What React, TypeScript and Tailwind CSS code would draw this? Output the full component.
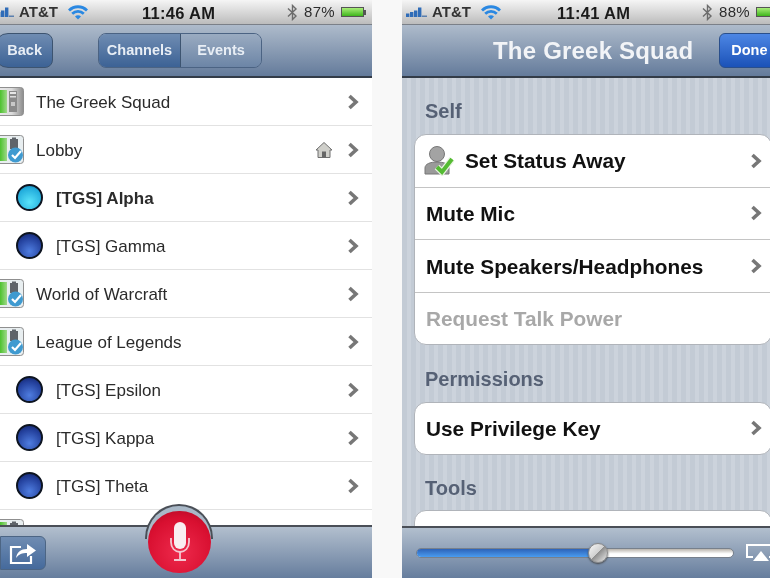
const rows = [
  { name: "The Greek Squad", icon: "server" },
  { name: "Lobby", icon: "channel", home: true },
  { name: "[TGS] Alpha", icon: "cyan", bold: true },
  { name: "[TGS] Gamma", icon: "blue" },
  { name: "World of Warcraft", icon: "channel" },
  { name: "League of Legends", icon: "channel" },
  { name: "[TGS] Epsilon", icon: "blue" },
  { name: "[TGS] Kappa", icon: "blue" },
  { name: "[TGS] Theta", icon: "blue" },
  { name: "", icon: "channel" },
];

function Chevron() {
  return (
    <svg width="12" height="16" viewBox="0 0 12 16" className="shrink-0">
      <path d="M2.5 2 L9 8 L2.5 14" fill="none" stroke="#777" strokeWidth="3.6" />
    </svg>
  );
}

function Signal() {
  return (
    <svg width="22" height="12" viewBox="0 0 22 12" className="shrink-0">
      <rect x="0" y="7.5" width="3.4" height="3.5" fill="#2f6cb8" />
      <rect x="4" y="6" width="3.4" height="5" fill="#2f6cb8" />
      <rect x="8" y="4.5" width="3.4" height="6.5" fill="#2f6cb8" />
      <rect x="12" y="1.5" width="3.4" height="9.5" fill="#2f6cb8" />
      <rect x="16" y="9.5" width="5" height="1.5" fill="#5a7fae" />
    </svg>
  );
}

function Wifi() {
  return (
    <svg width="20" height="15" viewBox="0 0 20 15" className="shrink-0">
      <path d="M1 5.5 C6 0.5 14 0.5 19 5.5" fill="none" stroke="#2a88e2" strokeWidth="2.8" />
      <path d="M4.2 8.7 C7.5 5.7 12.5 5.7 15.8 8.7" fill="none" stroke="#2a88e2" strokeWidth="2.8" />
      <path d="M7 11.4 C8.8 10 11.2 10 13 11.4 L10 14.5 Z" fill="#2a88e2" />
    </svg>
  );
}

function Bluetooth() {
  return (
    <svg width="11" height="17" viewBox="0 0 11 17" className="shrink-0">
      <path d="M1 4.5 L9 12 L5.5 15.5 L5.5 1.5 L9 5 L1 12.5" fill="none" stroke="#6b6b6b" strokeWidth="1.4" />
    </svg>
  );
}

function Battery() {
  return (
    <div className="flex shrink-0 items-center">
      <div className="h-[10px] w-[23px] border border-[#555] bg-[linear-gradient(#a8ee78,#3fb51d)]" />
      <div className="h-[5px] w-[2px] bg-[#555]" />
    </div>
  );
}

function StatusBar({ time, pct, pad, timeX, rightX }: { time: string; pct: string; pad: string; timeX: string; rightX: string }) {
  return (
    <div className="relative flex h-[25px] shrink-0 items-center border-b border-[#7b8088] bg-[linear-gradient(#f5f5f5,#bcbcbc)] text-[15px] text-[#2c2c2c]">
      <div className={`flex items-center ${pad}`}>
        <Signal />
        <span className="mr-[10px] ml-[4px] font-bold text-[#333]">AT&amp;T</span>
        <Wifi />
      </div>
      <span className={`absolute top-[1px] text-[16.5px] font-bold tracking-[0.3px] text-[#1a1a1a] ${timeX}`}>{time}</span>
      <div className={`absolute top-0 flex h-full items-center gap-[6px] whitespace-nowrap ${rightX}`}>
        <Bluetooth />
        <span className="text-[15px] font-medium tracking-[0.3px]">{pct}</span>
        <Battery />
      </div>
    </div>
  );
}

function Server() {
  return (
    <svg width="24" height="29" viewBox="0 0 24 29" className="mr-[12px] shrink-0">
      <defs>
        <linearGradient id="srvBody" x1="0" x2="1" y1="0" y2="0">
          <stop offset="0" stopColor="#ececec" />
          <stop offset="0.6" stopColor="#dcdcdc" />
          <stop offset="1" stopColor="#8c8c8c" />
        </linearGradient>
        <linearGradient id="srvGreen" x1="0" x2="1" y1="0" y2="0">
          <stop offset="0" stopColor="#4cc22e" />
          <stop offset="1" stopColor="#9fd889" />
        </linearGradient>
      </defs>
      <rect x="-6" y="0.5" width="29.5" height="28" rx="3" fill="url(#srvBody)" stroke="#8f8f8f" />
      <rect x="0" y="3" width="7" height="23" fill="url(#srvGreen)" />
      <rect x="9" y="4" width="8" height="21" fill="#8a8a8a" />
      <rect x="10" y="5" width="6" height="2" fill="#e6e6e6" />
      <rect x="10" y="9" width="6" height="1.5" fill="#dcdcdc" />
      <rect x="11" y="15" width="4" height="4" fill="#c8c8c8" />
    </svg>
  );
}

function Channel() {
  return (
    <svg width="24" height="29" viewBox="0 0 24 29" className="mr-[12px] shrink-0">
      <rect x="-6" y="0.5" width="29.5" height="28" rx="3" fill="#e8eef0" stroke="#8f8f8f" />
      <rect x="0" y="3" width="7" height="23" fill="url(#srvGreen)" />
      <rect x="10" y="4" width="8" height="10" fill="#5f646a" />
      <rect x="12" y="2.5" width="4" height="2" fill="#5f646a" />
      <circle cx="15.5" cy="20" r="7.5" fill="#3f9ad0" />
      <path d="M12 20 L15 23 L21 16" fill="none" stroke="#fff" strokeWidth="2.2" />
    </svg>
  );
}

function Orb({ cyan }: { cyan?: boolean }) {
  return (
    <div
      className={`mr-[13px] ml-[16px] h-[27px] w-[27px] shrink-0 rounded-full border-2 border-[#0d1420] ${
        cyan
          ? "bg-[radial-gradient(circle_at_50%_70%,#5ae4fa,#22acdc_70%,#0f6f9c)]"
          : "bg-[radial-gradient(circle_at_50%_75%,#4f7de0,#23409c_65%,#121f5e)]"
      }`}
    />
  );
}

function Home() {
  return (
    <svg width="18" height="18" viewBox="0 0 18 18" className="mr-[14px] shrink-0">
      <path d="M1 9 L9 1.5 L17 9 L15 9 L15 16.5 L3 16.5 L3 9 Z" fill="#cfcfca" stroke="#6f6f6f" />
      <rect x="7" y="10.5" width="4" height="6" fill="#666" />
    </svg>
  );
}

function ListRow({ row }: { row: (typeof rows)[number] }) {
  const isOrb = row.icon === "cyan" || row.icon === "blue";
  return (
    <div className="flex h-[48px] shrink-0 items-center border-b border-[#e2e2e2] bg-white pr-[13px]">
      {isOrb ? <Orb cyan={row.icon === "cyan"} /> : row.icon === "server" ? <Server /> : <Channel />}
      <span className={`flex-1 pt-[2px] text-[17px] text-[#2b2b2b] ${row.bold ? "font-bold" : ""}`}>{row.name}</span>
      {row.home && <Home />}
      <Chevron />
    </div>
  );
}

function LeftPhone() {
  return (
    <div className="relative flex h-[578px] w-[372px] shrink-0 flex-col">
      <StatusBar time="11:46 AM" pct="87%" pad="-ml-[7px]" timeX="left-[142px]" rightX="left-[287px]" />
      <div className="flex h-[53px] shrink-0 items-center border-b-2 border-[#333c48] bg-[linear-gradient(#aebbcb,#647b9b)]">
        <div className="-ml-[6px] flex h-[35px] w-[59px] items-center justify-end rounded-l-[14px] rounded-r-[8px] border border-[#3d5470] bg-[linear-gradient(#6f8cb2,#3c6295)] pt-[1px] pr-[10px] text-[14.5px] font-bold text-[#e8eef5]">
          Back
        </div>
        <div className="ml-[45px] flex h-[35px] w-[164px] overflow-hidden rounded-[8px] border border-[#4b6383] text-[14.5px] font-bold text-[#e8eef5]">
          <div className="flex w-[82px] items-center justify-center border-r border-[#3d5470] bg-[linear-gradient(#6f8cb2,#3c6295)] pt-[1px]">Channels</div>
          <div className="flex flex-1 items-center justify-center bg-[linear-gradient(#9aabc1,#6c85a6)] pt-[1px]">Events</div>
        </div>
      </div>
      <div className="flex min-h-0 flex-1 flex-col overflow-hidden bg-white">
        {rows.map((r, i) => (
          <ListRow key={i} row={r} />
        ))}
      </div>
      <div className="flex h-[53px] shrink-0 items-center border-t-2 border-[#4a4f57] bg-[linear-gradient(#b2bfce,#667d9d)]">
        <div className="flex h-[34px] w-[46px] items-center justify-center rounded-r-[6px] border border-[#4c6584] bg-[linear-gradient(#6f8cb2,#456a9c)]">
          <svg width="30" height="24" viewBox="0 0 30 24">
            <path d="M13 6 L3 6 L3 22 L23 22 L23 15" fill="none" stroke="#fff" strokeWidth="2.2" />
            <path d="M8 17 C9 11 13 8 19 8 L19 3 L28 9.5 L19 16 L19 12 C14 12 11 13 8 17 Z" fill="#fff" />
          </svg>
        </div>
      </div>
      <div className="absolute left-[145px] top-[504px] h-[35px] w-[68px] rounded-t-[34px] border-2 border-b-0 border-[#4a4f57] bg-[#a9b8c7]" />
      <div className="absolute left-[148px] top-[511px] flex h-[62px] w-[63px] items-center justify-center rounded-full bg-[radial-gradient(circle_at_50%_65%,#ee2a4c,#d80f30_65%,#a80a22)]">
        <svg width="24" height="42" viewBox="0 0 24 42">
          <rect x="6" y="1" width="12" height="27" rx="6" fill="#f9eef1" />
          <path d="M3 17 L3 21 C3 27 7 31 12 31 C17 31 21 27 21 21 L21 17" fill="none" stroke="#f3c6d0" strokeWidth="1.8" />
          <path d="M12 31 L12 38 M6 39 L18 39" stroke="#f3c6d0" strokeWidth="1.8" fill="none" />
        </svg>
      </div>
    </div>
  );
}

function SectionTitle({ text, className }: { text: string; className: string }) {
  return <div className={`ml-[23px] shrink-0 text-[20px] leading-[22px] font-bold text-[#566175] ${className}`}>{text}</div>;
}

function GroupRow({ text, muted, last, userIcon }: { text: string; muted?: boolean; last?: boolean; userIcon?: boolean }) {
  return (
    <div className={`flex items-center pr-[9px] pl-[11px] ${last ? "h-[51px]" : "h-[52.67px] border-b border-[#c4c4c4]"}`}>
      {userIcon && (
        <svg width="31" height="31" viewBox="0 0 31 31" className="mr-[10px] -ml-[2px] shrink-0">
          <circle cx="13" cy="9" r="7.5" fill="#a3a3a3" stroke="#777" />
          <path d="M1 29 L1 23 C1 19 6 17 13 17 C20 17 25 19 25 23 L25 29 Z" fill="#9a9a9a" stroke="#777" />
          <path d="M13 22 L18 27 L28 14" fill="none" stroke="#e8f3e0" strokeWidth="6.5" />
          <path d="M13 22 L18 27 L28 14" fill="none" stroke="#55bb33" strokeWidth="4" />
        </svg>
      )}
      <span className={`flex-1 text-[20.8px] font-bold ${muted ? "text-[#a8a8a8]" : "text-[#111]"}`}>{text}</span>
      {!muted && <Chevron />}
    </div>
  );
}

function RightPhone() {
  return (
    <div className="flex h-[578px] w-[382px] shrink-0 flex-col">
      <StatusBar time="11:41 AM" pct="88%" pad="ml-[4px]" timeX="left-[155px]" rightX="left-[300px]" />
      <div className="flex h-[53px] shrink-0 items-center border-b-2 border-[#333c48] bg-[linear-gradient(#aebbcb,#647b9b)]">
        <div className="ml-[91px] text-[24px] font-bold tracking-[0.2px] text-[#f2f4f7]">The Greek Squad</div>
        <div className="ml-[26px] flex h-[35px] w-[60px] items-center justify-center rounded-[6px] border border-[#2a4f8c] bg-[linear-gradient(#4d86e4,#1b52b8)] pt-[1px] text-[14.5px] font-bold text-white">
          Done
        </div>
      </div>
      <div className="flex min-h-0 flex-1 flex-col overflow-hidden bg-[repeating-linear-gradient(90deg,#c3cbd5_0,#c3cbd5_5px,#ccd3dc_5px,#ccd3dc_9px)]">
        <SectionTitle text="Self" className="mt-[22px]" />
        <div className="mx-[12px] mt-[12px] shrink-0 overflow-hidden rounded-[12px] border border-[#b0b4ba] bg-white">
          <GroupRow text="Set Status Away" userIcon />
          <GroupRow text="Mute Mic" />
          <GroupRow text="Mute Speakers/Headphones" />
          <GroupRow text="Request Talk Power" muted last />
        </div>
        <SectionTitle text="Permissions" className="mt-[23px]" />
        <div className="mx-[12px] mt-[12px] shrink-0 overflow-hidden rounded-[12px] border border-[#b0b4ba] bg-white">
          <GroupRow text="Use Privilege Key" last />
        </div>
        <SectionTitle text="Tools" className="mt-[22px]" />
        <div className="mx-[12px] mt-[11px] h-[60px] shrink-0 rounded-[12px] border border-[#b0b4ba] bg-white" />
      </div>
      <div className="flex h-[52px] shrink-0 items-center border-t-2 border-[#4a4f57] bg-[linear-gradient(#b2bfce,#667d9d)] pl-[14px]">
        <div className="relative h-[10px] w-[318px] overflow-visible rounded-full border border-[#77808c] bg-[linear-gradient(#b9b4ac,#fff_60%)]">
          <div className="h-full w-[182px] rounded-l-full bg-[linear-gradient(#2d63b8,#4a9cf0)]" />
          <div className="absolute left-[171px] top-[-6px] h-[20px] w-[20px] rounded-full border border-[#8a8a8a] bg-[linear-gradient(135deg,#f8f8f8,#d0d0d0_48%,#8f8f8f_50%,#eee)] shadow-[0_1px_2px_#444]" />
        </div>
        <svg width="30" height="20" viewBox="0 0 30 20" className="ml-[12px] shrink-0">
          <path d="M7 14 L1 14 L1 2 L29 2 L29 14 L23 14" fill="none" stroke="#fff" strokeWidth="2" />
          <path d="M15 8 L23 18 L7 18 Z" fill="#fff" />
        </svg>
      </div>
    </div>
  );
}

export default function App() {
  return (
    <div className="flex h-[578px] w-[770px] overflow-hidden bg-[#f8f8f8] font-['Liberation_Sans',Arial,sans-serif] blur-[0.5px]">
      <LeftPhone />
      <div className="w-[30px] shrink-0" />
      <RightPhone />
    </div>
  );
}
